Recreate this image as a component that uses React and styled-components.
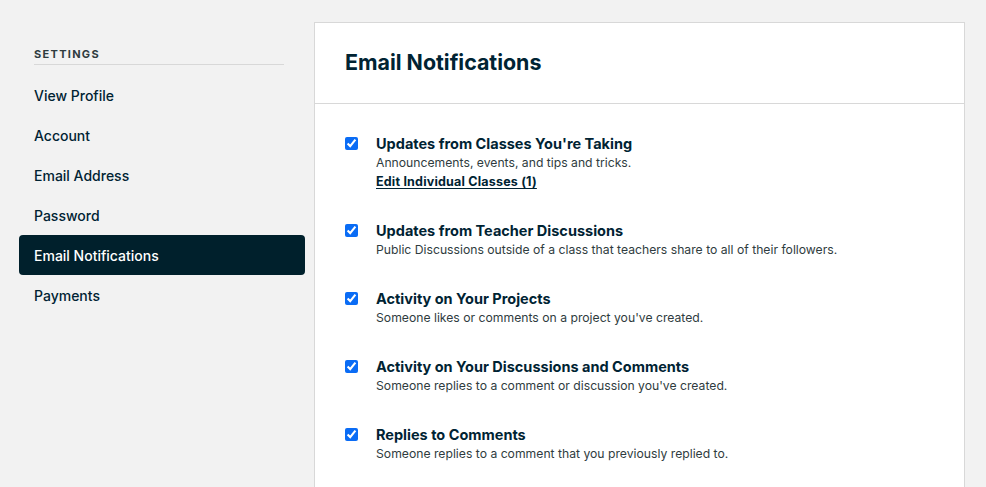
import styled, { createGlobalStyle } from "styled-components"

const GlobalStyle = createGlobalStyle`
  html, body {
    margin: 0;
    padding: 0;
    background: #f2f2f2;
    font-family: Inter, "Noto Sans", sans-serif;
    color: #002333;
  }
`;

const Page = styled.div`
  display: flex;
  align-items: flex-start;
  gap: 9px;
  padding: 22px 0 0 19px;
  height: 465px;
  overflow: hidden;
`;

const Sidebar = styled.nav`
  width: 286px;
  flex-shrink: 0;
  padding-top: 25px;
`;

const SideHeading = styled.div`
  margin: 0 21px 10px 15px;
  padding-bottom: 3px;
  border-bottom: 1px solid #d8d8d8;
  font-size: 11px;
  line-height: 14px;
  font-weight: 700;
  letter-spacing: 1.3px;
  color: #2f3c40;
`;

const NavItem = styled.a`
  display: flex;
  align-items: center;
  height: 40px;
  padding: 0 15px;
  border-radius: 4px;
  font-size: 14px;
  font-weight: 500;
  color: ${(p) => (p.$active ? "#ffffff" : "#002333")};
  background: ${(p) => (p.$active ? "#00202c" : "transparent")};
  text-decoration: none;
  cursor: pointer;
`;

const Panel = styled.section`
  width: 651px;
  flex-shrink: 0;
  box-sizing: border-box;
  background: #ffffff;
  border: 1px solid #d8d8d8;
  min-height: 600px;
`;

const PanelHeader = styled.header`
  height: 81px;
  display: flex;
  align-items: center;
  padding: 0 30px 3px;
  box-sizing: border-box;
  border-bottom: 1px solid #d8d8d8;
`;

const Title = styled.h1`
  margin: 0;
  font-size: 21.4px;
  font-weight: 700;
  color: #002333;
`;

const List = styled.div`
  display: flex;
  flex-direction: column;
  gap: 30px;
  padding: 30px 30px;
`;

const Option = styled.label`
  display: flex;
  align-items: flex-start;
  gap: 18px;
`;

const Check = styled.input.attrs({ type: "checkbox" })`
  width: 13px;
  height: 13px;
  margin: 3px 0 0 0;
  flex-shrink: 0;
  accent-color: #0a6cf5;
`;

const OptionText = styled.div`
  display: flex;
  flex-direction: column;
`;

const OptionTitle = styled.div`
  font-size: 14.5px;
  line-height: 19px;
  font-weight: 700;
  color: #002333;
`;

const OptionDesc = styled.div`
  font-size: 12.2px;
  line-height: 19px;
  color: #2f3c40;
`;

const EditLink = styled.a`
  align-self: flex-start;
  font-size: 12.5px;
  line-height: 19px;
  font-weight: 700;
  letter-spacing: 0.2px;
  color: #002333;
  text-decoration: underline;
  text-underline-offset: 2px;
  cursor: pointer;
`;

const navItems = [
  "View Profile",
  "Account",
  "Email Address",
  "Password",
  "Email Notifications",
  "Payments",
];

const options = [
  {
    title: "Updates from Classes You're Taking",
    desc: "Announcements, events, and tips and tricks.",
    link: "Edit Individual Classes (1)",
  },
  {
    title: "Updates from Teacher Discussions",
    desc: "Public Discussions outside of a class that teachers share to all of their followers.",
  },
  {
    title: "Activity on Your Projects",
    desc: "Someone likes or comments on a project you've created.",
  },
  {
    title: "Activity on Your Discussions and Comments",
    desc: "Someone replies to a comment or discussion you've created.",
  },
  {
    title: "Replies to Comments",
    desc: "Someone replies to a comment that you previously replied to.",
  },
];

export default function App() {
  return (
    <>
      <GlobalStyle />
      <Page>
        <Sidebar>
          <SideHeading>SETTINGS</SideHeading>
          {navItems.map((item) => (
            <NavItem key={item} $active={item === "Email Notifications"}>
              {item}
            </NavItem>
          ))}
        </Sidebar>
        <Panel>
          <PanelHeader>
            <Title>Email Notifications</Title>
          </PanelHeader>
          <List>
            {options.map((o) => (
              <Option key={o.title}>
                <Check defaultChecked />
                <OptionText>
                  <OptionTitle>{o.title}</OptionTitle>
                  <OptionDesc>{o.desc}</OptionDesc>
                  {o.link && <EditLink>{o.link}</EditLink>}
                </OptionText>
              </Option>
            ))}
          </List>
        </Panel>
      </Page>
    </>
  );
}
